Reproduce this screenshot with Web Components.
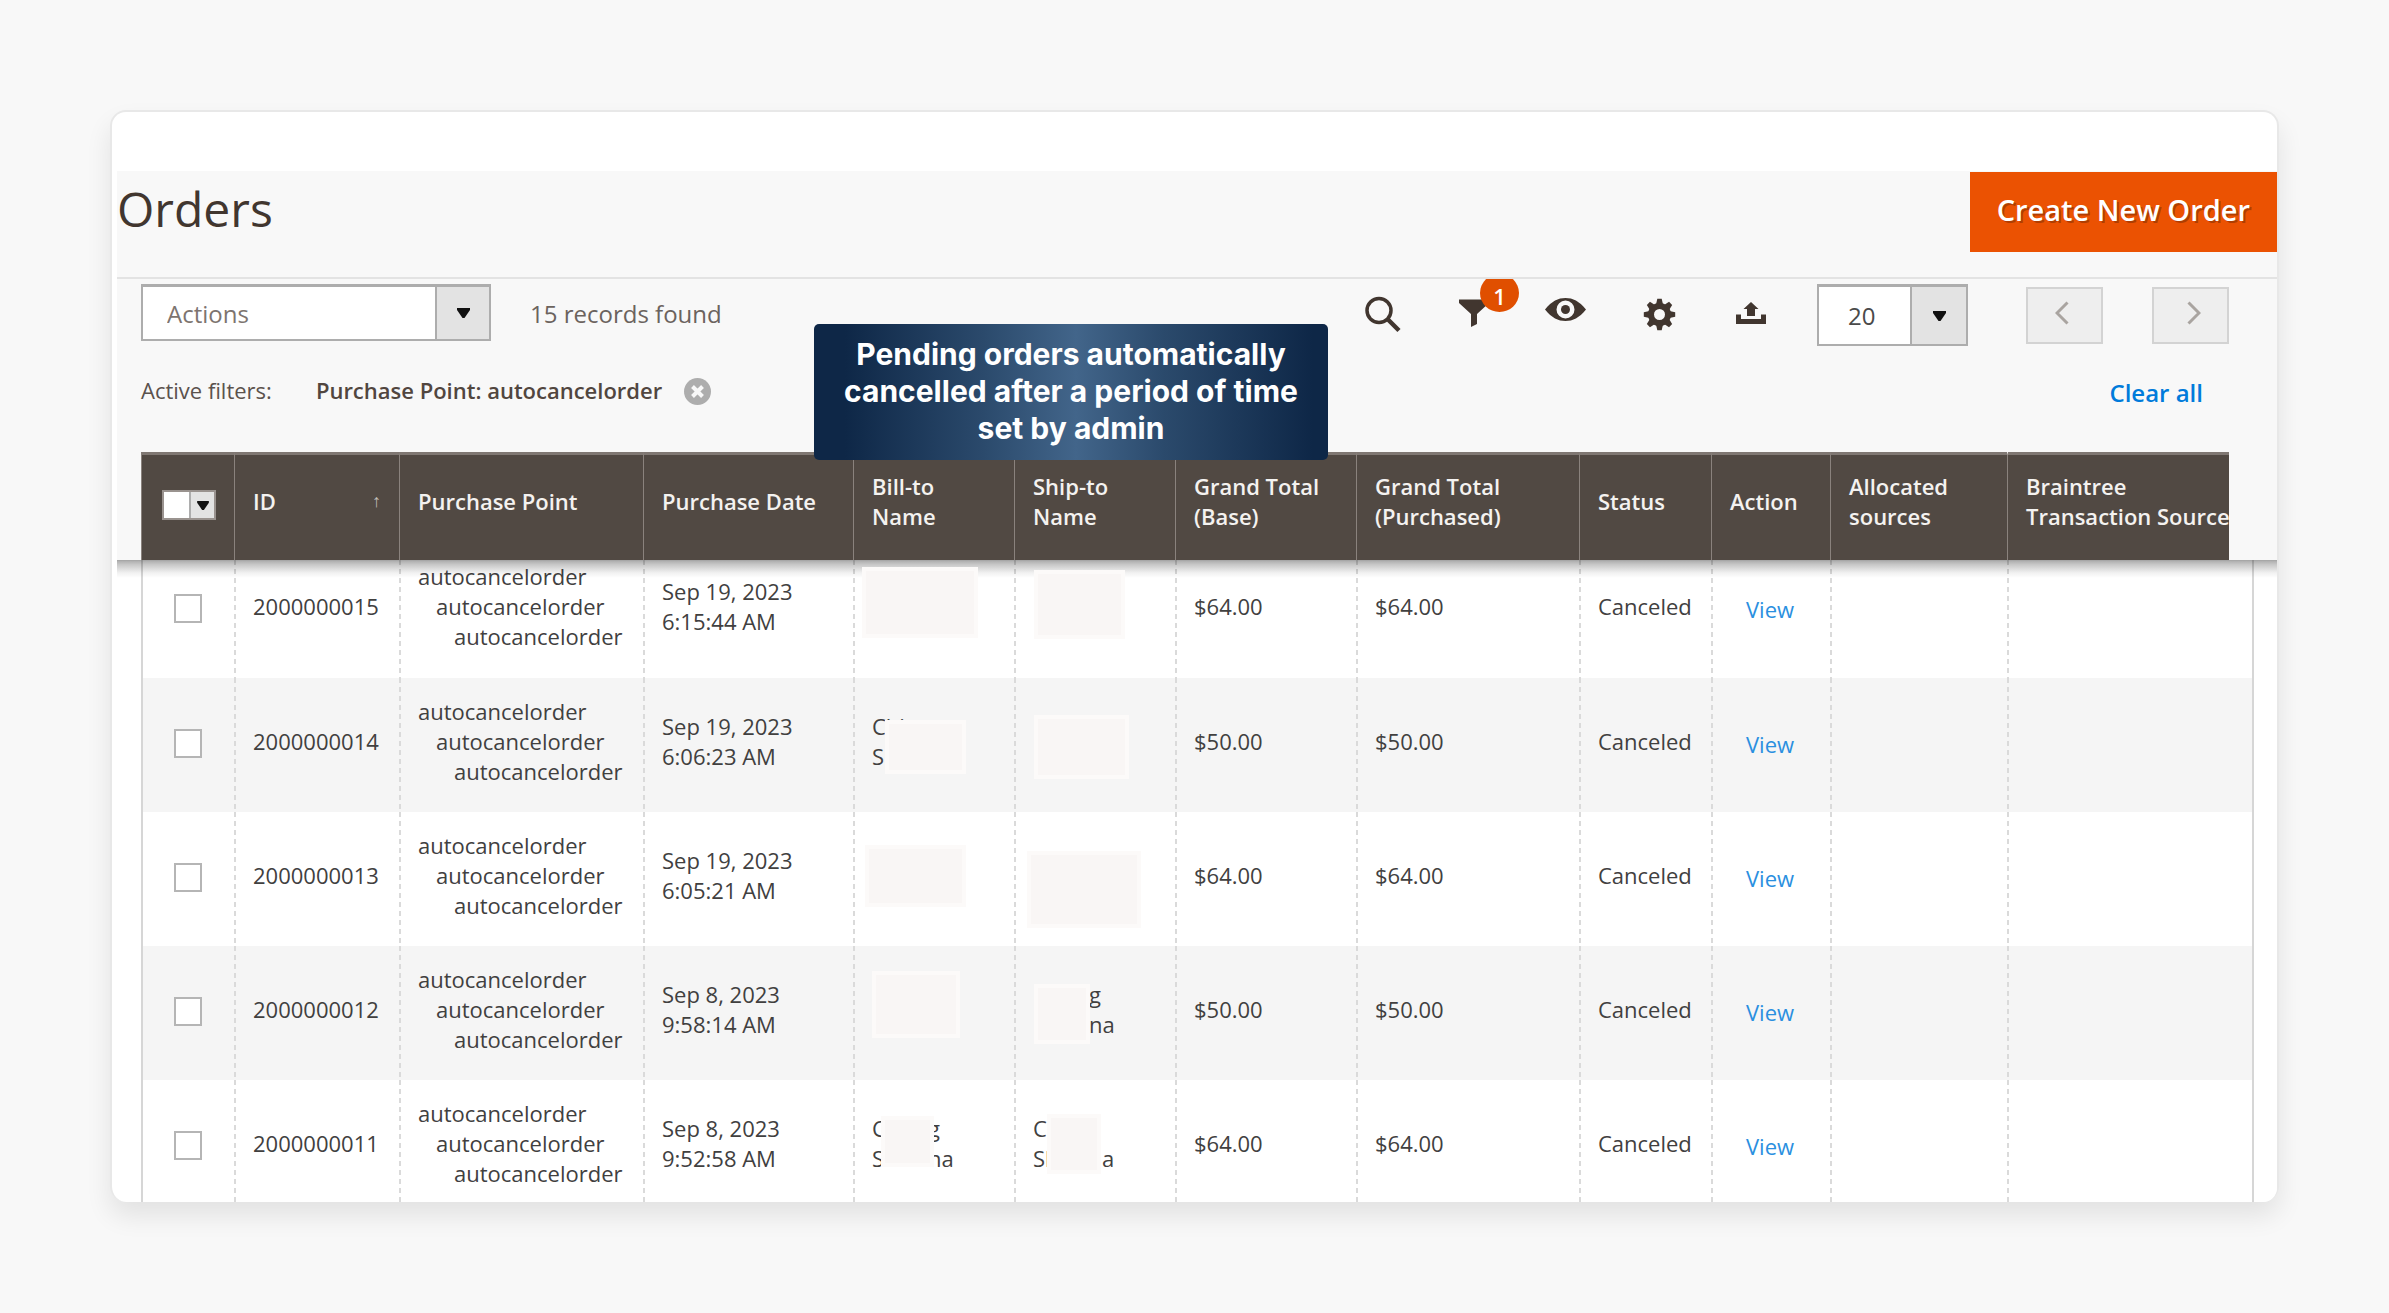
<!DOCTYPE html>
<html lang="en">
<head>
<meta charset="utf-8">
<title>Orders</title>
<style>
  html { background: #f8f8f8; }
  body { margin: 0; padding: 110px 110px 108px; background: #f8f8f8; font-family: "Open Sans", "Noto Sans", sans-serif; font-size: 22px; color: #41362f; }
</style>
</head>
<body>
<orders-page></orders-page>

<script>
const define = (name, html, setup) => {
  const tpl = document.createElement('template');
  tpl.innerHTML = html;
  customElements.define(name, class extends HTMLElement {
    constructor() {
      super();
      this.attachShadow({ mode: 'open' }).append(tpl.content.cloneNode(true));
    }
    connectedCallback() {
      if (setup && !this.ready) { this.ready = true; setup(this, this.shadowRoot); }
    }
  });
};

/* Drop-down with a grey arrow well on the right */
define('drop-select', `
<style>
  :host { display: block; position: relative; box-sizing: border-box; height: 57px; border: 2px solid #adadad; border-top-width: 3px; background: #fff; }
  select { appearance: none; display: block; width: 100%; height: 100%; box-sizing: border-box; margin: 0; border: 0; border-radius: 0; background: none; font: inherit; color: inherit; padding: 0 60px 0 var(--indent, 24px); }
  .well { position: absolute; top: 0; right: 0; bottom: 0; width: var(--well-width, 52px); border-left: 2px solid #adadad; background: #e3e3e3; pointer-events: none; display: flex; align-items: center; justify-content: center; }
  svg { width: 13px; height: 10px; fill: #111; display: block; }
</style>
<select></select>
<span class="well"><svg viewBox="0 0 13 10"><path d="M0 0H13V2L7.500 10H5.500L0 2z"/></svg></span>`,
(host, root) => {
  const select = root.querySelector('select');
  select.setAttribute('aria-label', host.getAttribute('label'));
  for (const text of host.getAttribute('options').split(',')) select.add(new Option(text));
});

const icons = {
  search: '<circle cx="19" cy="17.500" r="12" fill="none" stroke="currentColor" stroke-width="3.500"/><path d="M27.500 26L39 37.500" stroke="currentColor" stroke-width="4.500"/>',
  filter: '<path fill="currentColor" d="M7 6.500H37V10L25 21V31L19 34V21L7 10z"/>',
  eye: '<path fill="currentColor" fill-rule="evenodd" d="M1 16.500C8 8 14 5 21.500 5S35 8 42 16.500C35 25 29 28 21.500 28S8 25 1 16.500zM21.500 7.500a9 9 0 1 0 0 18a9 9 0 1 0 0-18z"/><circle cx="21.500" cy="16.500" r="4.500" fill="currentColor"/>',
  gear: '<g transform="translate(23.500 21.500)" fill="currentColor"><circle r="8.500" fill="none" stroke="currentColor" stroke-width="6"/>'
    + [0, 45, 90, 135, 180, 225, 270, 315].map(a => `<path transform="rotate(${a})" d="M-3.500 -10L-2.200 -15.700H2.200L3.500 -10z"/>`).join('') + '</g>',
  export: '<path fill="currentColor" d="M8 21.500H13V26H33V21.500H38V31H8zM23 9L30.500 16H27V23H19V16H15.500z"/>'
};

define('icon-button', `
<style>
  :host { display: block; position: relative; }
  button { display: block; width: 44px; height: 44px; padding: 0; border: 0; background: none; color: #41362f; }
  svg { display: block; width: 44px; height: 44px; overflow: visible; }
  .badge { position: absolute; left: 28px; top: -19px; width: 39px; height: 38px; border-radius: 50%; clip-path: inset(5px 0 0 0); background: #e04f00; color: #fff; font-weight: 600; font-size: 22px; line-height: 44px; text-align: center; }
  .badge:empty { display: none; }
</style>
<button type="button"><svg viewBox="0 0 44 44"></svg></button><span class="badge"></span>`,
(host, root) => {
  root.querySelector('svg').innerHTML = icons[host.getAttribute('icon')];
  root.querySelector('button').setAttribute('aria-label', host.getAttribute('label'));
  root.querySelector('.badge').textContent = host.getAttribute('count') || '';
});

define('page-button', `
<style>
  :host { display: block; }
  button { display: flex; align-items: center; justify-content: center; box-sizing: border-box; width: 77px; height: 57px; padding: 0 6px 5px 0; border: 2px solid #d3d3d3; background: #eee; color: #a9a4a0; }
  svg { width: 14px; height: 24px; fill: none; stroke: currentColor; stroke-width: 3; display: block; }
  :host([dir-next]) button { padding: 0 0 5px 6px; }
  :host([dir-next]) svg { transform: scaleX(-1); }
</style>
<button type="button" disabled><svg viewBox="0 0 14 24"><path d="M12.500 1.500L2 12L12.500 22.500"/></svg></button>`,
(host, root) => root.querySelector('button').setAttribute('aria-label', host.getAttribute('label')));

define('page-header', `
<style>
  :host { display: flex; justify-content: space-between; align-items: flex-start; height: 106px; border-bottom: 2px solid #e3e3e3; }
  h1 { margin: 0; font-size: 48px; font-weight: 400; line-height: 76px; color: #41362f; }
  button { height: 80px; margin: 1px 0 0; padding: 0 27px 4px; border: 0; background: #eb5202; color: #fff; font: 600 29px/76px "Open Sans", sans-serif; text-shadow: 2px 2px 0 rgba(0,0,0,.25); }
</style>
<h1><slot></slot></h1><button type="button">Create New Order</button>`);

define('grid-toolbar', `
<style>
  :host { display: flex; align-items: center; height: 62px; padding: 5px 48px 29px 24px; }
  .actions { width: 350px; align-self: flex-start; font-size: 24px; color: #7d746f; }
  .found { margin-left: 39px; padding-bottom: 4px; font-size: 24px; color: #6b635e; }
  .icons { display: flex; gap: 48px; margin-left: auto; }
  .size { width: 151px; height: 62px; margin-left: 45px; font-size: 24px; color: #4a4a4a; --indent: 29px; --well-width: 54px; }
  .pages { display: flex; gap: 49px; margin-left: 58px; }
</style>
<drop-select class="actions" label="Actions" options="Actions"></drop-select>
<span class="found">15 records found</span>
<div class="icons">
  <icon-button icon="search" label="Search"></icon-button>
  <icon-button icon="filter" label="Filters" count="1"></icon-button>
  <icon-button icon="eye" label="View"></icon-button>
  <icon-button icon="gear" label="Columns"></icon-button>
  <icon-button icon="export" label="Export"></icon-button>
</div>
<drop-select class="size" label="Per page" options="20"></drop-select>
<div class="pages"><page-button label="Previous"></page-button><page-button dir-next label="Next"></page-button></div>`);

define('active-filters', `
<style>
  :host { display: flex; align-items: flex-start; height: 34px; line-height: 30px; padding: 0 74px 43px 24px; color: #5b524d; }
  b { font-weight: 600; color: #51463f; margin-left: 44px; }
  button { width: 27px; height: 27px; margin: 3px 0 0 22px; padding: 0; border: 0; border-radius: 50%; background: #adadad; }
  svg { display: block; width: 27px; height: 27px; stroke: #f8f8f8; stroke-width: 4; }
  a { margin-left: auto; padding-top: 3px; font-size: 24px; font-weight: 600; color: #007bdb; text-decoration: none; }
</style>
<span>Active filters:</span><b>Purchase Point: autocancelorder</b>
<button type="button" aria-label="Remove filter"><svg viewBox="0 0 27 27"><path d="M8.500 8.500L18.500 18.500M18.500 8.500L8.500 18.500"/></svg></button>
<a href="#clear">Clear all</a>`);

/* Customer name whose middle part is covered by a pale box */
define('masked-name', `
<style>
  :host { display: block; position: relative; height: 60px; white-space: nowrap; }
  .line { display: flex; height: 30px; }
  .tail { position: absolute; }
  i { position: absolute; box-sizing: border-box; background: #f9f6f5; border: 4px solid #fcfaf9; z-index: 2; }
</style>
<div class="line"><span id="a"></span><span class="tail" id="b"></span></div>
<div class="line"><span id="c"></span><span class="tail" id="d"></span></div><i></i>`,
(host, root) => {
  const [x, y, w, h] = host.getAttribute('box').split(' ');
  const box = root.querySelector('i').style;
  box.left = x + 'px'; box.top = y + 'px'; box.width = w + 'px'; box.height = h + 'px';
  const [a = '', b = '', c = '', d = ''] = (host.getAttribute('text') || '').split('|');
  root.getElementById('a').textContent = a;
  root.getElementById('b').textContent = b;
  root.getElementById('c').textContent = c;
  root.getElementById('d').textContent = d;
  for (const t of root.querySelectorAll('.tail')) t.style.left = host.getAttribute('tail') + 'px';
});

const orders = [
  ['2000000015', 'Sep 19, 2023', '6:15:44 AM', '$64.00', 'box="-10 -9 116 71"', 'box="1 -6 91 69"'],
  ['2000000014', 'Sep 19, 2023', '6:06:23 AM', '$50.00', 'box="13 9 81 54" text="Chi||S|"', 'box="1 4 95 64"'],
  ['2000000013', 'Sep 19, 2023', '6:05:21 AM', '$64.00', 'box="-7 0 101 62"', 'box="-6 6 114 77"'],
  ['2000000012', 'Sep 8, 2023', '9:58:14 AM', '$50.00', 'box="0 -8 88 67"', 'box="1 5 56 60" text="|g||na" tail="56"'],
  ['2000000011', 'Sep 8, 2023', '9:52:58 AM', '$64.00', 'box="9 3 53 51" text="C|g|S|na" tail="56"', 'box="14 1 54 60" text="C||Sl|a" tail="69"']
];

define('orders-grid', `
<style>
  :host { display: block; position: relative; padding: 0 23px 0 24px; background: linear-gradient(#f8f8f8 109px, #fff 0); }
  table { width: 100%; table-layout: fixed; border-collapse: separate; border-spacing: 0; line-height: 30px; color: #41403f; }
  th { box-sizing: border-box; height: 108px; padding: 0 0 13px 18px; border-top: 3px solid #7f7772; border-left: 1px solid #8a827d; background: #514943 padding-box; color: #f4f2f0; font-weight: 600; line-height: 30px; text-align: left; overflow: hidden; white-space: nowrap; }
  th:first-child { padding-left: 20px; }
  th:last-child { border-right: 25px solid #f8f8f8; border-top-color: transparent; background: linear-gradient(#7f7772 3px, #514943 0) no-repeat border-box; background-size: calc(100% - 25px) 100%; }
  .sort { display: flex; justify-content: space-between; padding-right: 18px; }
  .sort span { font-family: "Liberation Sans", sans-serif; font-size: 18px; font-weight: 400; color: #c4bfbb; }
  td { box-sizing: border-box; height: 134px; padding: 0 0 9px 19px; white-space: nowrap; background: repeating-linear-gradient(#dadada 0 5px, transparent 5px 9px) left top / 2px 100% no-repeat; }
  td:first-child { background: none; border-left: 2px solid #d6d6d6; padding-left: 31px; }
  td:last-child { border-right: 2px solid #d6d6d6; }
  tr:first-child td { height: 118px; padding-bottom: 27px; }
  tr:last-child td { height: 122px; padding-top: 3px; padding-bottom: 0; }
  tbody tr:nth-child(even) { background: #f5f5f5; }
  td input { appearance: none; display: block; box-sizing: border-box; width: 28px; height: 29px; margin: 5px 0 0; border: 2px solid #b5b5b5; background: #fff; }
  .point span { display: block; }
  .point span + span { padding-left: 18px; }
  .point span + span + span { padding-left: 36px; }
  td a { display: block; padding: 6px 0 0 16px; line-height: 30px; color: #2a8fe0; text-decoration: none; }
  .all { display: flex; width: 54px; height: 30px; box-sizing: border-box; border: 2px solid #9a938f; margin-top: 8px; }
  .all input { appearance: none; flex: 1; margin: 0; background: #fff; }
  .all button { width: 25px; padding: 0; border: 0; border-left: 2px solid #adadad; background: #e3e3e3; display: flex; align-items: center; justify-content: center; }
  .all svg { width: 12px; height: 9px; fill: #111; }
  .shadow { position: absolute; left: 0; right: 0; top: 108px; height: 18px; background: linear-gradient(rgba(0,0,0,.34), rgba(0,0,0,.22) 25%, rgba(0,0,0,.06) 70%, transparent); z-index: 1; pointer-events: none; }
</style>
<table>
  <colgroup><col style="width:93px"><col style="width:165px"><col style="width:244px"><col style="width:210px"><col style="width:161px"><col style="width:161px"><col style="width:181px"><col style="width:223px"><col style="width:132px"><col style="width:119px"><col style="width:177px"><col></colgroup>
  <thead><tr>
    <th><div class="all"><input type="checkbox" aria-label="Select all"><button type="button" aria-label="Selection options"><svg viewBox="0 0 13 10"><path d="M0 0H13V2L7.500 10H5.500L0 2z"/></svg></button></div></th>
    <th><div class="sort">ID<span>↑</span></div></th><th>Purchase Point</th><th>Purchase Date</th>
    <th>Bill-to<br>Name</th><th>Ship-to<br>Name</th><th>Grand Total<br>(Base)</th><th>Grand Total<br>(Purchased)</th>
    <th>Status</th><th>Action</th><th>Allocated<br>sources</th><th>Braintree<br>Transaction Source</th>
  </tr></thead>
  <tbody></tbody>
</table>
<div class="shadow"></div>`,
(host, root) => {
  root.querySelector('tbody').innerHTML = orders.map(([id, day, time, total, bill, ship]) => `<tr>
    <td><input type="checkbox" aria-label="Select order ${id}"></td><td>${id}</td>
    <td class="point"><span>autocancelorder</span><span>autocancelorder</span><span>autocancelorder</span></td>
    <td>${day}<br>${time}</td><td><masked-name ${bill}></masked-name></td><td><masked-name ${ship}></masked-name></td>
    <td>${total}</td><td>${total}</td><td>Canceled</td><td><a href="#view">View</a></td><td></td><td></td></tr>`).join('');
});

define('info-callout', `
<style>
  :host { display: block; box-sizing: border-box; width: 514px; height: 136px; padding: 12px 10px; border-radius: 5px; background: linear-gradient(90deg, #0e2747 6%, #2b4a6c 33%, #42658a 51%, #2b4a6c 68%, #0e2747 97%); color: #fff; font: 700 30px/37px Inter, sans-serif; text-align: center; white-space: nowrap; }
</style>
<slot></slot>`);

define('orders-page', `
<style>
  :host { display: block; position: relative; box-sizing: border-box; border: 2px solid #e8e8e8; border-bottom: 0; border-radius: 16px; background: #fff; padding: 59px 0 0 5px; box-shadow: 0 14px 26px rgba(0,0,0,.09); }
  .panel { background: #f8f8f8; }
  orders-grid { border-radius: 0 0 14px 14px; }
  info-callout { position: absolute; left: 702px; top: 212px; z-index: 3; }
</style>
<div class="panel">
  <page-header>Orders</page-header>
  <grid-toolbar></grid-toolbar>
  <active-filters></active-filters>
</div>
<orders-grid></orders-grid>
<info-callout>Pending orders automatically<br>cancelled after a period of time<br>set by admin</info-callout>`);
</script>
</body>
</html>
